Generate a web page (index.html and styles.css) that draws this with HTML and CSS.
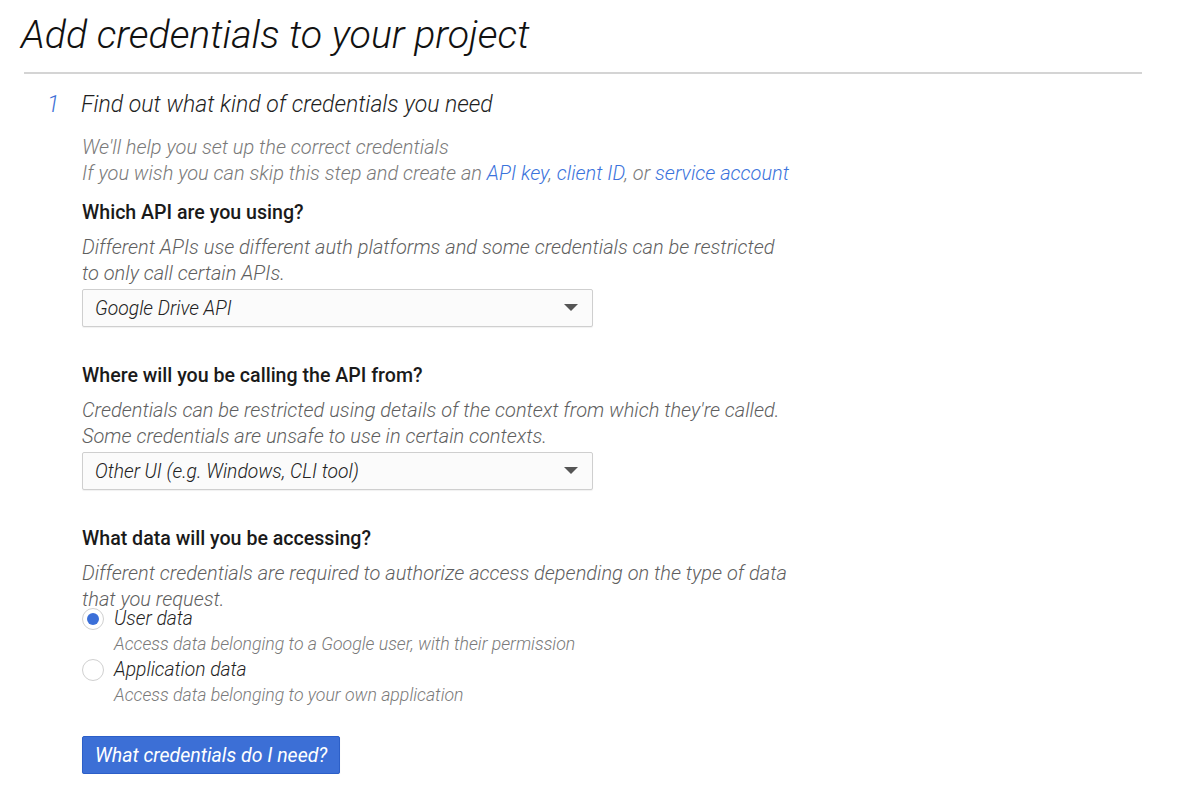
FILE: index.html
```
<!DOCTYPE html>
<html>
<head>
<meta charset="utf-8">
<link rel="stylesheet" href="styles.css">
</head>
<body>
<h1 class="title">Add credentials to your project</h1>
<div class="rule"></div>
<div class="step">
  <div class="step-head"><span class="step-num">1</span><span class="step-title">Find out what kind of credentials you need</span></div>
  <div class="step-body">
    <p class="intro">We'll help you set up the correct credentials<br>If you wish you can skip this step and create an <a href="#">API key</a>, <a href="#">client ID</a>, or <a href="#">service account</a></p>

    <h2 class="q">Which API are you using?</h2>
    <p class="desc">Different APIs use different auth platforms and some credentials can be restricted<br>to only call certain APIs.</p>
    <div class="select"><span>Google Drive API</span><svg class="caret" width="14" height="8" viewBox="0 0 14 8"><path d="M0 0h14L7 7z" fill="#555"/></svg></div>

    <h2 class="q">Where will you be calling the API from?</h2>
    <p class="desc">Credentials can be restricted using details of the context from which they're called.<br>Some credentials are unsafe to use in certain contexts.</p>
    <div class="select"><span>Other UI (e.g. Windows, CLI tool)</span><svg class="caret" width="14" height="8" viewBox="0 0 14 8"><path d="M0 0h14L7 7z" fill="#555"/></svg></div>

    <h2 class="q">What data will you be accessing?</h2>
    <p class="desc">Different credentials are required to authorize access depending on the type of data<br>that you request.</p>
    <div class="radios">
      <div class="radio-item">
        <span class="radio checked"></span>
        <div class="radio-text">
          <div class="radio-label">User data</div>
          <div class="radio-sub">Access data belonging to a Google user, with their permission</div>
        </div>
      </div>
      <div class="radio-item">
        <span class="radio"></span>
        <div class="radio-text">
          <div class="radio-label">Application data</div>
          <div class="radio-sub">Access data belonging to your own application</div>
        </div>
      </div>
    </div>
    <button class="btn">What credentials do I need?</button>
  </div>
</div>
</body>
</html>
```
FILE: styles.css
```
html, body {
  margin: 0;
  padding: 0;
  background: #fff;
}
body {
  font-family: Roboto, "Noto Sans", sans-serif;
  font-weight: 300;
  font-style: italic;
  color: #212121;
}
.title {
  margin: 0;
  padding: 13px 0 0 21px;
  font-size: 39.3px;
  line-height: 44px;
  font-weight: 300;
  font-style: italic;
  color: #111;
}
.rule {
  margin: 15px 0 0 24px;
  width: 1118px;
  height: 2px;
  background: #d4d4d4;
}
.step {
  margin-top: 16px;
}
.step-head {
  display: flex;
  align-items: center;
  height: 30px;
  font-size: 23px;
  line-height: 30px;
}
.step-num {
  width: 34px;
  padding-left: 47px;
  color: #3d6fd6;
}
.step-title {
  color: #1f1f1f;
}
.step-body {
  padding-left: 82px;
}
.intro {
  margin: 14px 0 0;
  font-size: 20px;
  line-height: 26px;
  color: #7a7a7a;
}
.intro a {
  color: #3b73dc;
  text-decoration: none;
}
.q {
  margin: 14px 0 0;
  font-size: 19.6px;
  line-height: 26px;
  font-weight: 500;
  font-style: normal;
  color: #1a1a1a;
}
.select + .q {
  margin-top: 36px;
}
.desc {
  margin: 8px 0 0;
  font-size: 20px;
  line-height: 26px;
  color: #5f5f5f;
}
.select {
  margin-top: 3px;
  width: 511px;
  height: 38px;
  box-sizing: border-box;
  border: 1px solid #cfcfcf;
  border-radius: 2px;
  background: #fbfbfb;
  box-shadow: 0 1px 1px rgba(0,0,0,0.06);
  display: flex;
  align-items: center;
  justify-content: space-between;
  padding: 0 14px 0 12px;
  font-size: 19.3px;
  color: #222;
}
.caret {
  display: block;
}
.radios {
  margin-top: -6px;
}
.radio-item {
  display: flex;
  align-items: flex-start;
}
.radio {
  width: 22px;
  height: 22px;
  box-sizing: border-box;
  border: 1.5px solid #d0d0d0;
  border-radius: 50%;
  background: #fff;
  margin-top: 2px;
  margin-right: 10px;
  flex: none;
  display: flex;
  align-items: center;
  justify-content: center;
}
.radio.checked::after {
  content: "";
  width: 12px;
  height: 12px;
  border-radius: 50%;
  background: #3b6fd8;
}
.radio-label {
  font-size: 19.3px;
  line-height: 25px;
  color: #1f1f1f;
}
.radio-sub {
  font-size: 17.7px;
  line-height: 26px;
  color: #7a7a7a;
}
.btn {
  margin-top: 28px;
  height: 38px;
  padding: 0 12px;
  border: 1px solid #2c5fc8;
  border-radius: 2px;
  background: #3c6fd6;
  color: #fff;
  font-family: Roboto, "Noto Sans", sans-serif;
  font-weight: 400;
  font-style: italic;
  font-size: 19.5px;
  box-shadow: 0 1px 1px rgba(0,0,0,0.15);
}
```
